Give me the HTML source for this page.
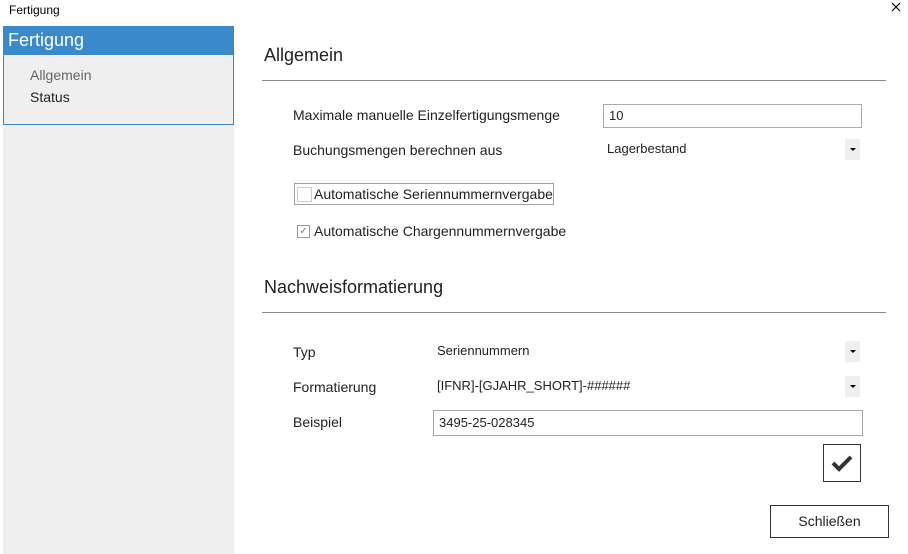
<!DOCTYPE html>
<html><head><meta charset="utf-8"><style>
body{margin:0;width:908px;height:554px;background:#fff;font-family:"Liberation Sans",sans-serif;position:relative;overflow:hidden;color:#222}
.a{position:absolute}
.lbl{font-size:14px;color:#222}
.inp{position:absolute;border:1px solid #a9a9a9;background:#fff;font-size:13px;padding-left:5px;box-sizing:border-box;line-height:22px}
.arr{position:absolute;width:15px;height:21px;background:#efefef}
.arr:after{content:"";position:absolute;left:5px;top:9px;border-left:3px solid transparent;border-right:3px solid transparent;border-top:3px solid #000}
.hr{position:absolute;height:1px;background:#888}
</style></head><body>
<div class="a" style="left:9px;top:3px;font-size:12px;color:#000">Fertigung</div>
<svg class="a" style="left:891px;top:2px" width="10" height="10" viewBox="0 0 10 10"><path d="M1 1L9 9M9 1L1 9" stroke="#000" stroke-width="1.2"/></svg>
<div class="a" style="left:3px;top:125px;width:231px;height:429px;background:#efefef"></div>
<div class="a" style="left:3px;top:26px;width:229px;height:98px;background:#efefef;border:1px solid #3a87c7;border-top:none"></div>
<div class="a" style="left:3px;top:26px;width:231px;height:29px;background:#3a8acb;color:#fff;font-size:18px;line-height:28px;padding-left:5px;box-sizing:border-box">Fertigung</div>
<div class="a lbl" style="left:30px;top:67px;color:#666">Allgemein</div>
<div class="a lbl" style="left:30px;top:89px">Status</div>

<div class="a" style="left:264px;top:45px;font-size:18px;color:#222">Allgemein</div>
<div class="hr" style="left:262px;top:80px;width:624px"></div>
<div class="a lbl" style="left:293px;top:107px">Maximale manuelle Einzelfertigungsmenge</div>
<div class="inp" style="left:603px;top:104px;width:259px;height:24px">10</div>
<div class="a lbl" style="left:293px;top:142px">Buchungsmengen berechnen aus</div>
<div class="a" style="left:607px;top:141px;font-size:13px">Lagerbestand</div>
<div class="arr" style="left:845px;top:139px"></div>
<div class="a" style="left:294px;top:183px;width:260px;height:22px;border:1px solid #a0a0a0;box-sizing:border-box"></div>
<div class="a" style="left:297px;top:187px;width:13px;height:13px;border:1px solid #ccc;background:#fff"></div>
<div class="a lbl" style="left:314px;top:186px">Automatische Seriennummernvergabe</div>
<div class="a" style="left:297px;top:225px;width:11px;height:11px;border:1px solid #999;font-size:10px;line-height:11px;text-align:center;color:#777">✓</div>
<div class="a lbl" style="left:314px;top:223px">Automatische Chargennummernvergabe</div>

<div class="a" style="left:264px;top:277px;font-size:18px;color:#222">Nachweisformatierung</div>
<div class="hr" style="left:262px;top:312px;width:624px"></div>
<div class="a lbl" style="left:293px;top:344px">Typ</div>
<div class="a" style="left:437px;top:343px;font-size:13px">Seriennummern</div>
<div class="arr" style="left:845px;top:341px"></div>
<div class="a lbl" style="left:293px;top:379px">Formatierung</div>
<div class="a" style="left:437px;top:378px;font-size:13px">[IFNR]-[GJAHR_SHORT]-######</div>
<div class="arr" style="left:845px;top:376px"></div>
<div class="a lbl" style="left:293px;top:414px">Beispiel</div>
<div class="inp" style="left:433px;top:410px;width:430px;height:26px;line-height:24px">3495-25-028345</div>
<div class="a" style="left:823px;top:444px;width:38px;height:38px;border:1px solid #333;box-sizing:border-box">
<svg width="36" height="36" viewBox="0 0 36 36" class="a" style="left:0;top:0"><path d="M9 18 L15 24 L27 12" fill="none" stroke="#333" stroke-width="4"/></svg></div>
<div class="a" style="left:770px;top:505px;width:119px;height:33px;border:1px solid #333;box-sizing:border-box;text-align:center;line-height:31px;font-size:14px">Schließen</div>
</body></html>
